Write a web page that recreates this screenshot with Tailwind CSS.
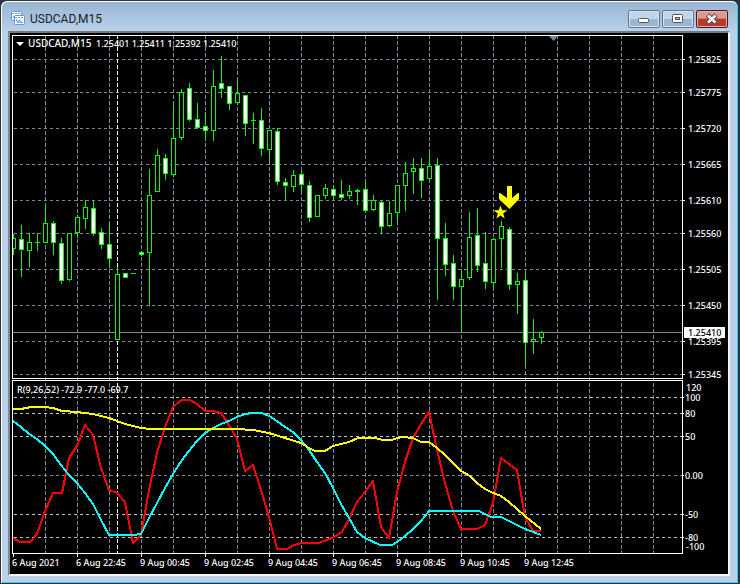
<!DOCTYPE html>
<html lang="en">

<head>
    <meta charset="UTF-8">
    <meta name="viewport" content="width=device-width, initial-scale=1.0">
    <title>USDCAD,M15</title>
    <script src="https://cdn.jsdelivr.net/npm/@tailwindcss/browser@4"></script>
</head>

<body class="bg-[#33313a]">
    <div class="h-screen w-full pt-px pl-px pr-[2px] pb-px">
        <div class="h-full flex flex-col rounded-t-md border-t border-l border-white border-r border-r-[#2fd0f0] border-b border-b-[#2fd0f0] bg-[#b9d1ea] pl-[6px] pr-[7px] pb-[6px]">
            <header class="h-[29px] shrink-0 -ml-[6px] -mr-[7px] pl-[9px] pr-[9px] pt-[4px] flex items-center rounded-t-md bg-linear-to-b from-[#98b4d2] to-[#b9d1ea]">
                <svg class="w-4 h-4" viewBox="0 0 16 16" fill="none">
                    <rect x="0.5" y="0.5" width="10" height="9" rx="1" fill="#fff" stroke="#5c9bea" />
                    <path d="M1 2.500h9" stroke="#5c9bea" stroke-dasharray="2 1" />
                    <path d="M2 7l1-2 1 2 1-3" stroke="#5c9bea" />
                    <rect x="3.5" y="4.5" width="10" height="9" rx="1" fill="#fff" stroke="#5c9bea" />
                    <path d="M4 6.500h9" stroke="#5c9bea" stroke-dasharray="2 1" />
                    <path d="M5 8l2 4 1.500-3 1.500 3 2-1" stroke="#3c7fdc" />
                </svg>
                <h1 class="ml-[3px] text-[12px] leading-4 text-[#1c1c24] font-[Roboto,sans-serif]">USDCAD,M15</h1>
                <div class="ml-auto flex gap-[2px]">
                    <button aria-label="Minimize" class="w-8 h-[18px] flex items-center justify-center rounded-xs border border-[#62788f] bg-linear-to-b from-[#c2d5e9] from-50% to-[#9db6d0] to-50% shadow-[inset_0_0_0_1px_#d5e4f3]">
                        <svg class="w-3 h-3" viewBox="0 0 12 12"><rect x="0.5" y="5.500" width="10" height="4" rx="1" fill="#fff" stroke="#53565f" /></svg>
                    </button>
                    <button aria-label="Maximize" class="w-8 h-[18px] flex items-center justify-center rounded-xs border border-[#62788f] bg-linear-to-b from-[#c2d5e9] from-50% to-[#9db6d0] to-50% shadow-[inset_0_0_0_1px_#d5e4f3]">
                        <svg class="w-3 h-3" viewBox="0 0 12 12"><rect x="0.5" y="1.500" width="10" height="8" rx="1" fill="#fff" stroke="#53565f" /><rect x="3.500" y="4.500" width="4" height="2" fill="#9db6d0" stroke="#53565f" /></svg>
                    </button>
                    <button aria-label="Close" class="w-8 h-[18px] flex items-center justify-center rounded-xs border border-[#4b1620] bg-linear-to-b from-[#dc9a8e] from-45% to-[#b93a26] to-50% shadow-[inset_0_0_0_1px_#e5b0a5]">
                        <svg class="w-3 h-3" viewBox="0 0 12 12"><path d="M1.500 2l8.500 8M10 2L1.500 10" stroke="#4d4b58" stroke-width="4.500" /><path d="M2 2.500l7.500 7M9.500 2.500L2 9.500" stroke="#fff" stroke-width="2.500" /></svg>
                    </button>
                </div>
            </header>
            <main class="flex-1 min-h-0 bg-black border-2 border-t-[#77787c] border-l-[#88898d] border-r-[#f4f4f4] border-b-[#f4f4f4]">
                <svg id="chart" class="block w-full h-full text-[9px] font-medium font-['Noto_Sans',sans-serif]" viewBox="10 33 718 541" fill="none">
                    <g id="grid" shape-rendering="crispEdges"></g>
                    <g id="candles" shape-rendering="crispEdges"></g>
                    <g id="lines" stroke-width="2" stroke-linejoin="round" shape-rendering="crispEdges"></g>
                    <g shape-rendering="crispEdges" stroke="#fff">
                        <rect x="12.5" y="35.5" width="670" height="343" />
                        <rect x="12.5" y="380.5" width="670" height="173" />
                    </g>
                    <path d="M549 36h9l-4.500 5z" fill="#778899" />
                    <path d="M16 42h8l-4 4z" fill="#fff" />
                    <path d="M507 186h5v12l6-5h1v6l-9.500 10L499 199v-6h1l7 5z" fill="#ff0" />
                    <path d="M500.500 205.500l1.700 4.800h5.100l-4.100 3.100 1.500 5.100-4.200-3-4.200 3 1.500-5.100-4.100-3.100h5.100z" fill="#ff0" />
                    <g id="labels" fill="#fff"></g>
                </svg>
            </main>
        </div>
    </div>

    <script>
        // x step is 8, [high, low, body top, body bottom, filled]
        const candles = [
            [234,255,238,249,0],[225,277,239,250,1],[233,267,242,251,0],[233,251,242,243,0],[205,243,223,243,0],
            [221,255,223,243,1],[238,284,243,281,1],[233,281,233,280,0],[215,238,217,233,0],[200,229,207,219,0],
            [200,236,208,234,1],[228,249,232,245,1],[222,268,244,259,1],[267,340,274,340,0],[273,278,273,278,1],
            [273,274,273,274,0],[251,256,252,255,1],[169,306,195,253,0],[149,192,155,192,0],[154,180,158,174,1],
            [103,176,138,175,0],[89,140,92,138,0],[83,121,88,120,1],[103,129,119,128,1],[112,141,126,131,1],
            [70,141,86,131,0],[56,98,83,89,1],[86,110,86,104,1],[79,104,93,103,0],[95,136,95,124,1],
            [113,144,120,121,0],[108,156,120,149,1],[130,161,130,150,0],[128,185,131,182,1],[178,200,182,186,1],
            [170,192,175,187,0],[171,192,174,185,1],[181,222,185,218,1],[195,217,195,217,0],[184,199,188,196,0],
            [185,200,189,196,1],[180,200,194,198,1],[185,199,191,196,0],[189,205,190,192,0],[181,212,189,211,1],
            [195,211,200,210,0],[200,234,202,227,1],[201,227,213,226,0],[185,222,185,213,0],[162,211,173,186,0],
            [158,194,168,172,0],[158,198,168,181,1],[153,179,166,179,0],[158,300,165,239,1],[223,276,238,265,1],
            [255,300,263,287,1],[271,332,279,287,0],[212,280,237,278,0],[208,272,235,266,1],[232,289,263,282,1],
            [238,287,239,283,0],[221,268,226,239,0],[227,290,229,285,1],[273,314,281,285,0],[273,365,280,343,1],
            [319,354,339,342,0],[331,344,332,338,0]
        ];

        const series = [
            ["#f00", "13,538 20,542 30,542 37,534 45,511 53,493 62,493 69,458 77,446 85,425 93,435 101,468 109,490 117,493 125,502 133,543 141,535 149,490 157,453 165,427 173,407 180,401 183,400 190,400 197,404 205,411 213,411 221,413 229,425 237,439 245,471 253,465 261,490 269,517 277,549 287,549 294,545 302,543 319,543 327,540 334,537 342,532 349,519 357,502 365,492 373,481 381,527 389,538 397,492 405,462 413,438 421,424 429,412 437,450 445,483 453,511 461,529 477,529 485,525 493,503 501,458 517,470 525,517 533,531 541,531"],
            ["#0ff", "13,421 21,427 29,434 37,439 45,446 53,454 61,465 69,475 77,483 85,493 93,504 101,520 109,535 133,535 141,534 149,518 157,503 165,488 173,474 180,463 188,452 197,441 205,433 213,428 221,424 229,421 237,417 245,414 252,413 262,413 269,416 277,421 285,427 293,432 301,440 309,450 317,462 325,473 333,488 341,504 349,518 357,532 365,538 380,545 392,545 397,542 405,536 413,529 421,521 429,511 479,511 485,514 491,517 501,517 509,521 517,525 525,529 533,532 541,535"],
            ["#ff0", "13,409 21,409 31,407 45,407 53,408 62,411 77,412 93,414 109,418 125,424 141,428 150,429 237,429 253,430 269,433 285,438 301,443 309,448 315,451 325,451 333,446 341,444 349,442 358,438 375,438 383,440 392,440 397,438 403,437 413,438 421,442 429,442 437,448 445,455 461,471 470,476 477,483 485,489 493,493 501,496 509,502 525,516 541,529"]
        ];

        const prices = [[59,"1.25825"],[92,"1.25775"],[128,"1.25720"],[164,"1.25665"],[200,"1.25610"],[233,"1.25560"],[269,"1.25505"],[305,"1.25450"],[341,"1.25395"],[374,"1.25345"]];
        const levels = [[397,"100"],[413,"80"],[436,"50"],[475,"0.00"],[514,"-50"],[537,"-80"]];
        const times = ["6 Aug 2021","6 Aug 22:45","9 Aug 00:45","9 Aug 02:45","9 Aug 04:45","9 Aug 06:45","9 Aug 08:45","9 Aug 10:45","9 Aug 12:45"];

        const text = (x, y, s, cls = "") => `<text x="${x}" y="${y}" class="${cls}">${s}</text>`;
        const line = (x1, y1, x2, y2, color, dash = "") =>
            `<path d="M${x1} ${y1}L${x2} ${y2}" stroke="${color}" stroke-dasharray="${dash}"/>`;

        let grid = "";
        for (let x = 45; x < 682; x += 32) grid += line(x + .5, 35, x + .5, 553, "#778899", "4 2");
        prices.forEach(([y]) => grid += line(14, y + .5, 682, y + .5, "#778899", "3 3") + line(682, y + .5, 685, y + .5, "#fff"));
        levels.forEach(([y]) => grid += line(14, y + .5, 682, y + .5, y == 475 ? "#778899" : "#c0c0c0", "3 3") + line(682, y + .5, 684, y + .5, "#fff"));
        grid += line(117.5, 35, 117.5, 553, "#fff", "4 2");
        grid += line(13, 332.5, 682, 332.5, "#778899");
        times.forEach((t, i) => grid += line(13.5 + i * 64, 553, 13.5 + i * 64, 557, "#fff"));
        document.getElementById("grid").innerHTML = grid;

        document.getElementById("candles").innerHTML = candles.map(([high, low, top, bottom, filled], i) => {
            const x = 13 + i * 8;
            const wick = `<rect x="${x}" y="${high}" width="1" height="${low - high}" fill="#0f0"/>`;
            const h = bottom - top;
            const body = `<rect x="${x - 2}" y="${top}" width="5" height="${h}" fill="#0f0"/>`;
            const inner = h > 2 ? `<rect x="${x - 1}" y="${top + 1}" width="3" height="${h - 2}" fill="${filled ? "#fff" : "#000"}"/>` : "";
            return wick + body + inner;
        }).join("") + '<rect x="10" y="230" width="2" height="30" fill="#000"/>';

        document.getElementById("lines").innerHTML = series.map(([color, points]) => `<polyline points="${points}" stroke="${color}"/>`).join("");

        let labels = text(28, 47, "USDCAD,M15", "text-[10px]") + text(96, 47, "1.25401 1.25411 1.25392 1.25410") + text(17, 393, "R(9,26,52) -72.9 -77.0 -69.7");
        prices.forEach(([y, s]) => labels += text(688, y + 4, s));
        levels.forEach(([y, s]) => labels += text(685, y + 4, s));
        labels += text(686, 391, "120") + text(686, 550, "-100");
        times.forEach((t, i) => labels += text(12 + i * 64, 566, t));
        labels += '<rect x="684" y="327" width="41" height="11" fill="#fff"/>' + text(688, 336, "1.25410", "fill-black");
        document.getElementById("labels").innerHTML = labels;
    </script>
</body>

</html>
